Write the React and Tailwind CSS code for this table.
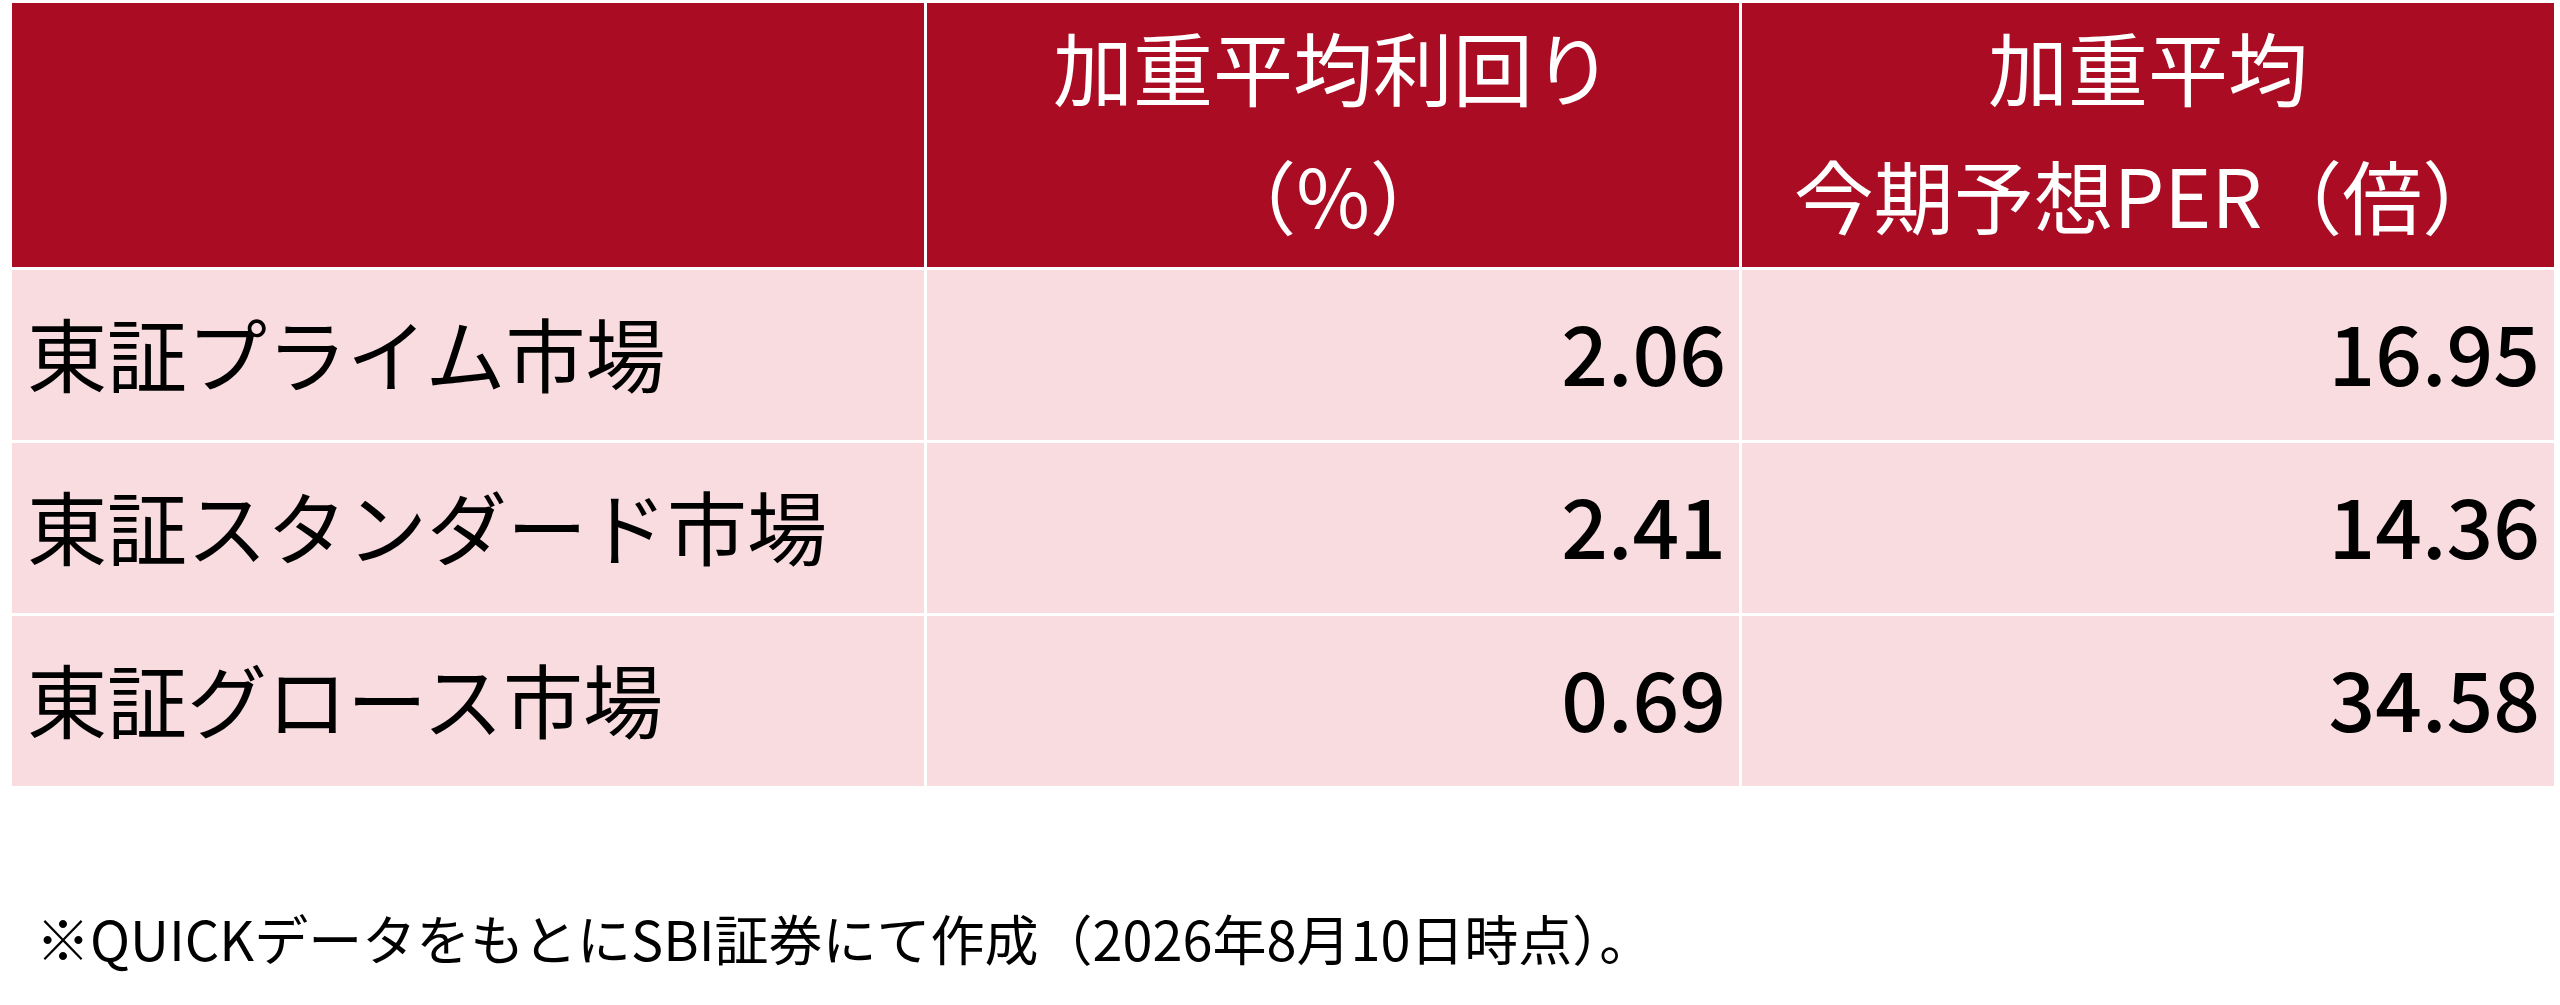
const HEADERS = [
  ['加重平均利回り', '（%）'],
  ['加重平均', '今期予想PER（倍）'],
];

const ROWS = [
  { market: '東証プライム市場', yieldPct: '2.06', per: '16.95' },
  { market: '東証スタンダード市場', yieldPct: '2.41', per: '14.36' },
  { market: '東証グロース市場', yieldPct: '0.69', per: '34.58' },
];

const FONT = { fontFamily: '"Noto Sans CJK JP", "Noto Sans", sans-serif' };

export default function App() {
  return (
    <div className="w-[2560px] h-[1005px] bg-white text-black" style={FONT}>
      <div className="ml-[12px] pt-[3px] grid grid-cols-[912px_812px_812px] grid-rows-[264px_170px_170px_170px] gap-[3px]">
        {/* header */}
        <div className="bg-[#aa0d23]" />
        {HEADERS.map((lines, i) => (
          <div key={i} className="bg-[#aa0d23] text-white text-[80px] leading-[132px] flex flex-col items-center">
            {lines.map(l => (
              <span key={l} className="-mt-[4px]">{l}</span>
            ))}
          </div>
        ))}

        {/* body */}
        {ROWS.map(r => (
          <div key={r.market} className="contents">
            <div className="bg-[#f8dce0] flex items-center pl-[15px] pb-[8px] text-[80px] leading-none">
              {r.market}
            </div>
            <div className="bg-[#f8dce0] flex items-center justify-end pr-[13px] pb-[8px] text-[82px] leading-none font-medium">
              {r.yieldPct}
            </div>
            <div className="bg-[#f8dce0] flex items-center justify-end pr-[14px] pb-[8px] text-[82px] leading-none font-medium">
              {r.per}
            </div>
          </div>
        ))}
      </div>

      <p className="mt-[111px] pl-[36px] text-[54px] leading-[81px]">
        ※QUICKデータをもとにSBI証券にて作成（2026年8月10日時点）。
      </p>
    </div>
  );
}
